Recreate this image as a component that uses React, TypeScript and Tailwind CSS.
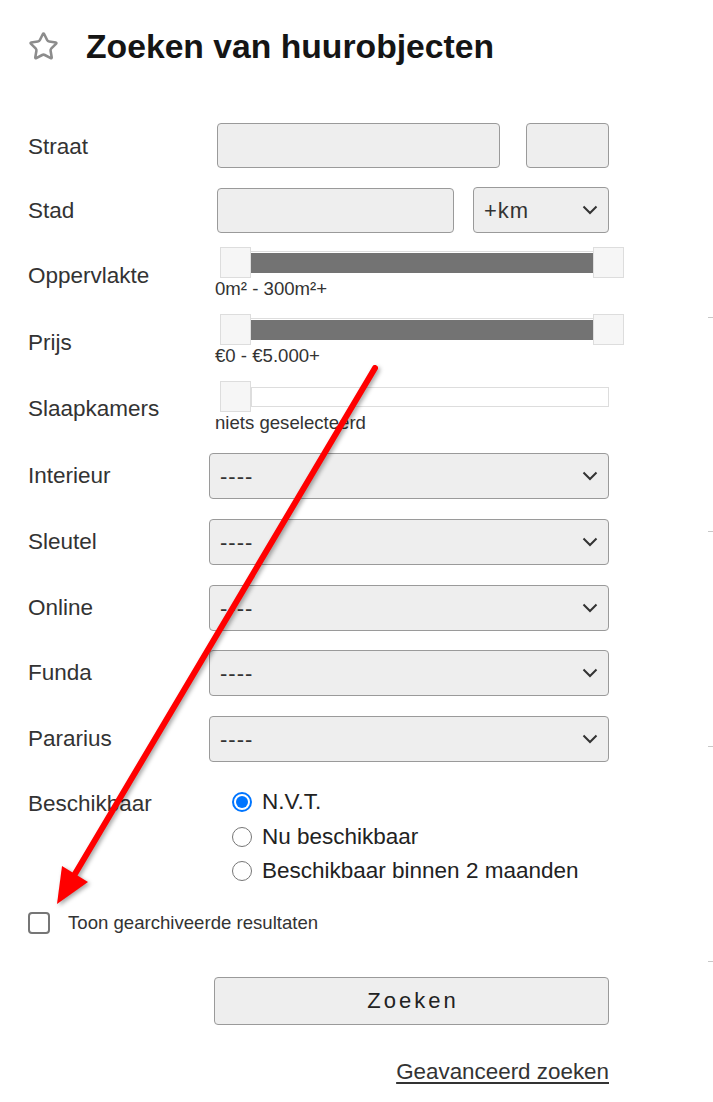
import React from 'react';
import { Star } from 'lucide-react';

const font = { fontFamily: '"Liberation Sans", Arial, sans-serif' };

const Chevron: React.FC = () => (
  <svg width="16" height="10" viewBox="0 0 16 10" fill="none" className="shrink-0">
    <path d="M1.5 1.5 L8 8 L14.5 1.5" stroke="#333" strokeWidth="2" />
  </svg>
);

const Label: React.FC<{ text: string; w: string; pt?: string }> = ({ text, w, pt = '' }) => (
  <div className={`${w} ${pt} shrink-0 text-[22.5px] leading-[26px] text-[#333]`}>{text}</div>
);

const Handle: React.FC = () => (
  <div className="w-[31px] h-[31px] shrink-0 bg-[#f6f6f6] border border-[#dddddd]" />
);

const RangeSlider: React.FC<{ label: string; text: string }> = ({ label, text }) => (
  <div className="flex items-center">
    <Label text={label} w="w-[187px]" pt="pt-[5px]" />
    <div className="flex flex-col">
      <div className="flex items-center ml-[5px] w-[404px]">
        <Handle />
        <div className="flex-1 h-[23px] border-t border-[#dddddd] pt-[1px] pb-[1px]">
          <div className="h-full bg-[#737373]" />
        </div>
        <Handle />
      </div>
      <div className="text-[18.6px] leading-[21px] text-[#333]">{text}</div>
    </div>
  </div>
);

const SelectRow: React.FC<{ label: string; mt: string }> = ({ label, mt }) => (
  <div className={`flex items-center ${mt}`}>
    <Label text={label} w="w-[181px]" />
    <div className="w-[400px] h-[46px] flex items-center justify-between pl-[10px] pr-[10px] bg-[#eeeeee] border border-[#9a9a9a] rounded-[4px]">
      <span className="text-[22px] tracking-[1px] text-[#333]">----</span>
      <Chevron />
    </div>
  </div>
);

const Radio: React.FC<{ checked?: boolean; text: string }> = ({ checked, text }) => (
  <div className="flex items-center h-[34.5px]">
    {checked ? (
      <div className="w-[20px] h-[20px] rounded-full border-2 border-[#0075ff] p-[2px] bg-white">
        <div className="w-full h-full rounded-full bg-[#0075ff]" />
      </div>
    ) : (
      <div className="w-[20px] h-[20px] rounded-full border-[1.5px] border-[#767676] bg-white" />
    )}
    <span className="ml-[10px] text-[22.5px] leading-[26px] text-[#222]">{text}</span>
  </div>
);

export default function App() {
  return (
    <div className="relative w-[713px] h-[1102px] bg-white overflow-hidden" style={font}>
      <div className="pl-[28px] pt-[26px]">
        {/* title */}
        <div className="flex items-center h-[40px]">
          <Star size={31} strokeWidth={2} color="#8c8c8c" />
          <h1 className="ml-[27px] text-[33.7px] leading-[40px] font-bold text-[#151515]">
            Zoeken van huurobjecten
          </h1>
        </div>

        {/* Straat */}
        <div className="flex items-center mt-[57px]">
          <Label text="Straat" w="w-[189px]" pt="pt-[2px]" />
          <div className="w-[283px] h-[45px] bg-[#eeeeee] border border-[#9a9a9a] rounded-[4px]" />
          <div className="ml-[26px] w-[83px] h-[45px] bg-[#eeeeee] border border-[#9a9a9a] rounded-[4px]" />
        </div>

        {/* Stad */}
        <div className="flex items-center mt-[19px]">
          <Label text="Stad" w="w-[189px]" pt="pt-[2px]" />
          <div className="w-[237px] h-[45px] bg-[#eeeeee] border border-[#9a9a9a] rounded-[4px]" />
          <div className="ml-[19px] w-[136px] h-[46px] flex items-center justify-between pl-[10px] pr-[10px] bg-[#eeeeee] border border-[#9a9a9a] rounded-[4px]">
            <span className="text-[22px] tracking-[1px] text-[#333]">+km</span>
            <Chevron />
          </div>
        </div>

        <div className="mt-[14px]">
          <RangeSlider label="Oppervlakte" text="0m² - 300m²+" />
        </div>
        <div className="mt-[15px]">
          <RangeSlider label="Prijs" text="€0 - €5.000+" />
        </div>

        {/* Slaapkamers */}
        <div className="flex items-center mt-[15px]">
          <Label text="Slaapkamers" w="w-[187px]" pt="pt-[4px]" />
          <div className="flex flex-col">
            <div className="flex items-center ml-[5px] w-[389px]">
              <Handle />
              <div className="flex-1 h-[20px] bg-white border border-[#dddddd]" />
            </div>
            <div className="text-[18.6px] leading-[21px] text-[#333]">niets geselecteerd</div>
          </div>
        </div>

        <SelectRow label="Interieur" mt="mt-[20px]" />
        <SelectRow label="Sleutel" mt="mt-[20px]" />
        <SelectRow label="Online" mt="mt-[20px]" />
        <SelectRow label="Funda" mt="mt-[19px]" />
        <SelectRow label="Pararius" mt="mt-[20px]" />

        {/* Beschikbaar */}
        <div className="flex items-start mt-[23px]">
          <div className="w-[204px] shrink-0 pt-[6px] text-[22.5px] leading-[26px] text-[#333]">Beschikbaar</div>
          <div className="flex flex-col">
            <Radio checked text="N.V.T." />
            <Radio text="Nu beschikbaar" />
            <Radio text="Beschikbaar binnen 2 maanden" />
          </div>
        </div>

        {/* archived */}
        <div className="flex items-center mt-[23px]">
          <div className="w-[22px] h-[22px] rounded-[4px] border-2 border-[#767676] bg-white" />
          <span className="ml-[18px] text-[18.6px] leading-[22px] text-[#333]">Toon gearchiveerde resultaten</span>
        </div>

        {/* submit */}
        <div className="mt-[43px] ml-[186px] w-[395px] h-[48px] flex items-center justify-center bg-[#eeeeee] border border-[#9a9a9a] rounded-[4px]">
          <span className="text-[22px] tracking-[3px] text-[#222] pl-[3px]">Zoeken</span>
        </div>

        <div className="mt-[34px] w-[581px] flex justify-end">
          <a href="#" className="text-[22.4px] leading-[26px] text-[#333] underline underline-offset-[3px]">
            Geavanceerd zoeken
          </a>
        </div>
      </div>

      {/* edge ticks */}
      <div className="absolute right-0 top-[317px] w-[5px] h-px bg-[#c8c8c8]" />
      <div className="absolute right-0 top-[531px] w-[5px] h-px bg-[#c8c8c8]" />
      <div className="absolute right-0 top-[746px] w-[5px] h-px bg-[#c8c8c8]" />
      <div className="absolute right-0 top-[961px] w-[5px] h-px bg-[#c8c8c8]" />

      {/* annotation arrow */}
      <svg
        className="absolute inset-0 pointer-events-none drop-shadow-[2px_2px_2px_rgba(0,0,0,0.35)]"
        width="713"
        height="1102"
        viewBox="0 0 713 1102"
      >
        <line x1="375" y1="368" x2="72" y2="879" stroke="#ff0000" strokeWidth="6" strokeLinecap="round" />
        <polygon points="57,904 88,882 62,866" fill="#ff0000" />
      </svg>
    </div>
  );
}
